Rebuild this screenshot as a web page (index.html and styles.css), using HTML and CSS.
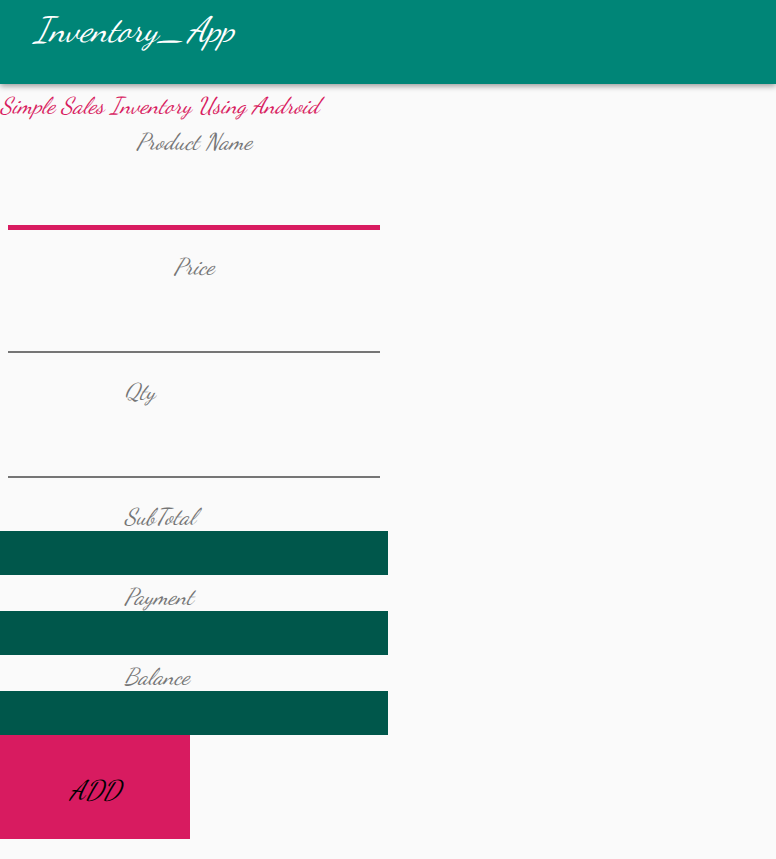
FILE: index.html
```html
<!DOCTYPE html>
<html lang="en">
<head>
<meta charset="utf-8">
<meta name="viewport" content="width=device-width, initial-scale=1">
<title>Inventory_App</title>
<link rel="stylesheet" href="styles.css">
</head>
<body>
<header class="app-bar"><h1 class="app-title">Inventory_App</h1></header>
<main>
<h2 class="heading">Simple Sales Inventory Using Android</h2>
<form class="form">
<label class="label label-center" for="product">Product Name</label>
<input class="field field-active" id="product" type="text">
<label class="label label-center" for="price">Price</label>
<input class="field" id="price" type="text">
<label class="label" for="qty">Qty</label>
<input class="field" id="qty" type="text">
<label class="label" for="subtotal">SubTotal</label>
<output class="total" id="subtotal"></output>
<label class="label" for="payment">Payment</label>
<input class="total" id="payment" type="text">
<label class="label" for="balance">Balance</label>
<output class="total" id="balance"></output>
<button class="add" type="button">ADD</button>
</form>
</main>
</body>
</html>
```

FILE: styles.css
```css
* {
  box-sizing: border-box;
}

body {
  margin: 0;
  background: #fafafa;
  color: #757575;
  font-family: "Dancing Script", "Liberation Serif", cursive;
  font-style: italic;
  font-size: 23px;
}

.app-bar {
  padding: 8px 34px 32px;
  background: #008577;
  box-shadow: 0 2px 6px rgba(0, 0, 0, 0.4);
}

.app-title {
  margin: 0;
  color: #fff;
  font-size: 35px;
  font-weight: 400;
  line-height: 44px;
}

.heading {
  margin: 0;
  padding-top: 8px;
  color: #d81b60;
  font-size: 23px;
  font-weight: 400;
  line-height: 28px;
}

.form {
  display: flex;
  flex-direction: column;
  width: 50%;
}

.label {
  padding-top: 8px;
  padding-left: 32%;
  line-height: 28px;
}

.label-center {
  padding-left: 0;
  text-align: center;
}

.field {
  height: 72px;
  margin: 0 8px 17px;
  padding: 0 4px;
  border: 0;
  border-bottom: 2px solid #757575;
  outline: 0;
  background: transparent;
  font: inherit;
}

.field-active {
  height: 74px;
  margin-bottom: 15px;
  border-bottom: 5px solid #d81b60;
}

.total {
  height: 44px;
  padding: 0 4px;
  border: 0;
  border-radius: 0;
  background: #00574b;
  color: #fff;
  font: inherit;
}

.add {
  align-self: flex-start;
  width: 49%;
  height: 104px;
  padding-top: 8px;
  border: 0;
  background: #d81b60;
  color: #000;
  font: inherit;
  font-size: 27px;
}
```
